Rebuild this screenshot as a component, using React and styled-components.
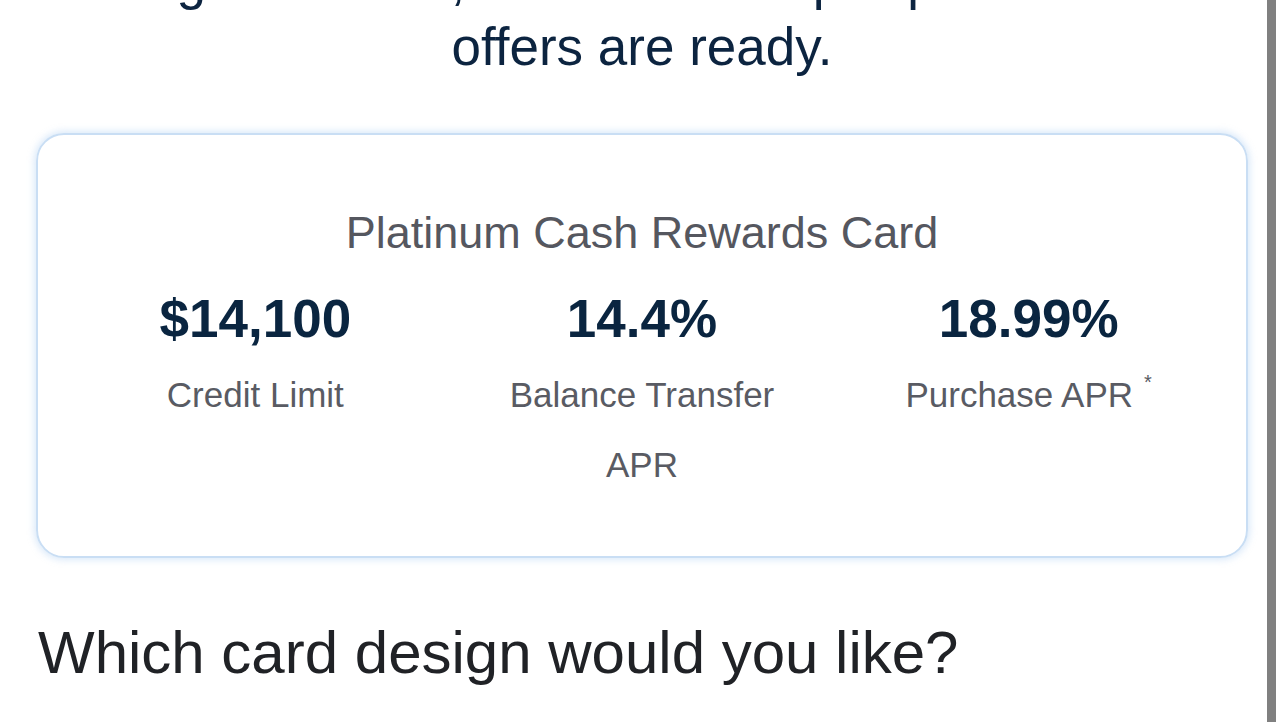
import React from 'react'
import styled, { createGlobalStyle } from 'styled-components'

const GlobalStyle = createGlobalStyle`
    html, body {
        margin: 0;
        padding: 0;
        background: #ffffff;
        overflow: hidden;
    }
    body {
        font-family: "Liberation Sans", Arial, Helvetica, sans-serif;
    }
`

const Page = styled.div`
    width: 100%;
    height: 722px;
    overflow: hidden;
`

// the view is scrolled, so the first line of the intro sits above the top edge
const Content = styled.main`
    margin-top: -52px;
    padding: 0 36px;
    display: flex;
    flex-direction: column;
`

const Intro = styled.h1`
    margin: 0 auto;
    max-width: 1180px;
    text-align: center;
    font-size: 53px;
    line-height: 66px;
    font-weight: 400;
    color: #0c2440;
`

const OfferCard = styled.section`
    margin-top: 53px;
    border: 2px solid #c9def4;
    border-radius: 28px;
    box-shadow: 0 0 7px 2px rgba(150, 192, 238, 0.35);
    padding: 71px 24px 56px;
    display: flex;
    flex-direction: column;
    align-items: center;
`

const CardName = styled.h2`
    margin: 0;
    font-size: 45px;
    line-height: 54px;
    font-weight: 400;
    color: #55575f;
`

const Stats = styled.div`
    margin-top: 27px;
    width: 100%;
    display: grid;
    grid-template-columns: repeat(3, 1fr);
`

const Stat = styled.div`
    display: flex;
    flex-direction: column;
    align-items: center;
    padding: 0 40px;
    text-align: center;
`

const Value = styled.div`
    font-size: 53px;
    line-height: 64px;
    font-weight: 700;
    color: #0a2540;
`

const Label = styled.div`
    margin-top: 9px;
    font-size: 35px;
    line-height: 70px;
    color: #595b63;
`

const Footnote = styled.sup`
    font-size: 20px;
    vertical-align: top;
    line-height: 1;
    position: relative;
    top: 12px;
    margin-left: 11px;
`

const Question = styled.h2`
    margin: 59px 0 0 2px;
    font-size: 60px;
    line-height: 72px;
    font-weight: 400;
    color: #202226;
`

const ScrollThumb = styled.div`
    position: fixed;
    top: 0;
    right: 8px;
    width: 9px;
    height: 100%;
    background: #808080;
`

const stats = [
    { value: '$14,100', label: 'Credit Limit' },
    { value: '14.4%', label: 'Balance Transfer APR' },
    { value: '18.99%', label: 'Purchase APR', note: '*' },
]

const App = () => {
    return (
        <Page>
            <GlobalStyle />
            <Content>
                <Intro>
                    Congratulations, Michael! Your prequalified card offers are ready.
                </Intro>
                <OfferCard>
                    <CardName>Platinum Cash Rewards Card</CardName>
                    <Stats>
                        {stats.map((s) => (
                            <Stat key={s.label}>
                                <Value>{s.value}</Value>
                                <Label>
                                    {s.label}
                                    {s.note && <Footnote>{s.note}</Footnote>}
                                </Label>
                            </Stat>
                        ))}
                    </Stats>
                </OfferCard>
                <Question>Which card design would you like?</Question>
            </Content>
            <ScrollThumb />
        </Page>
    )
}

export default App
